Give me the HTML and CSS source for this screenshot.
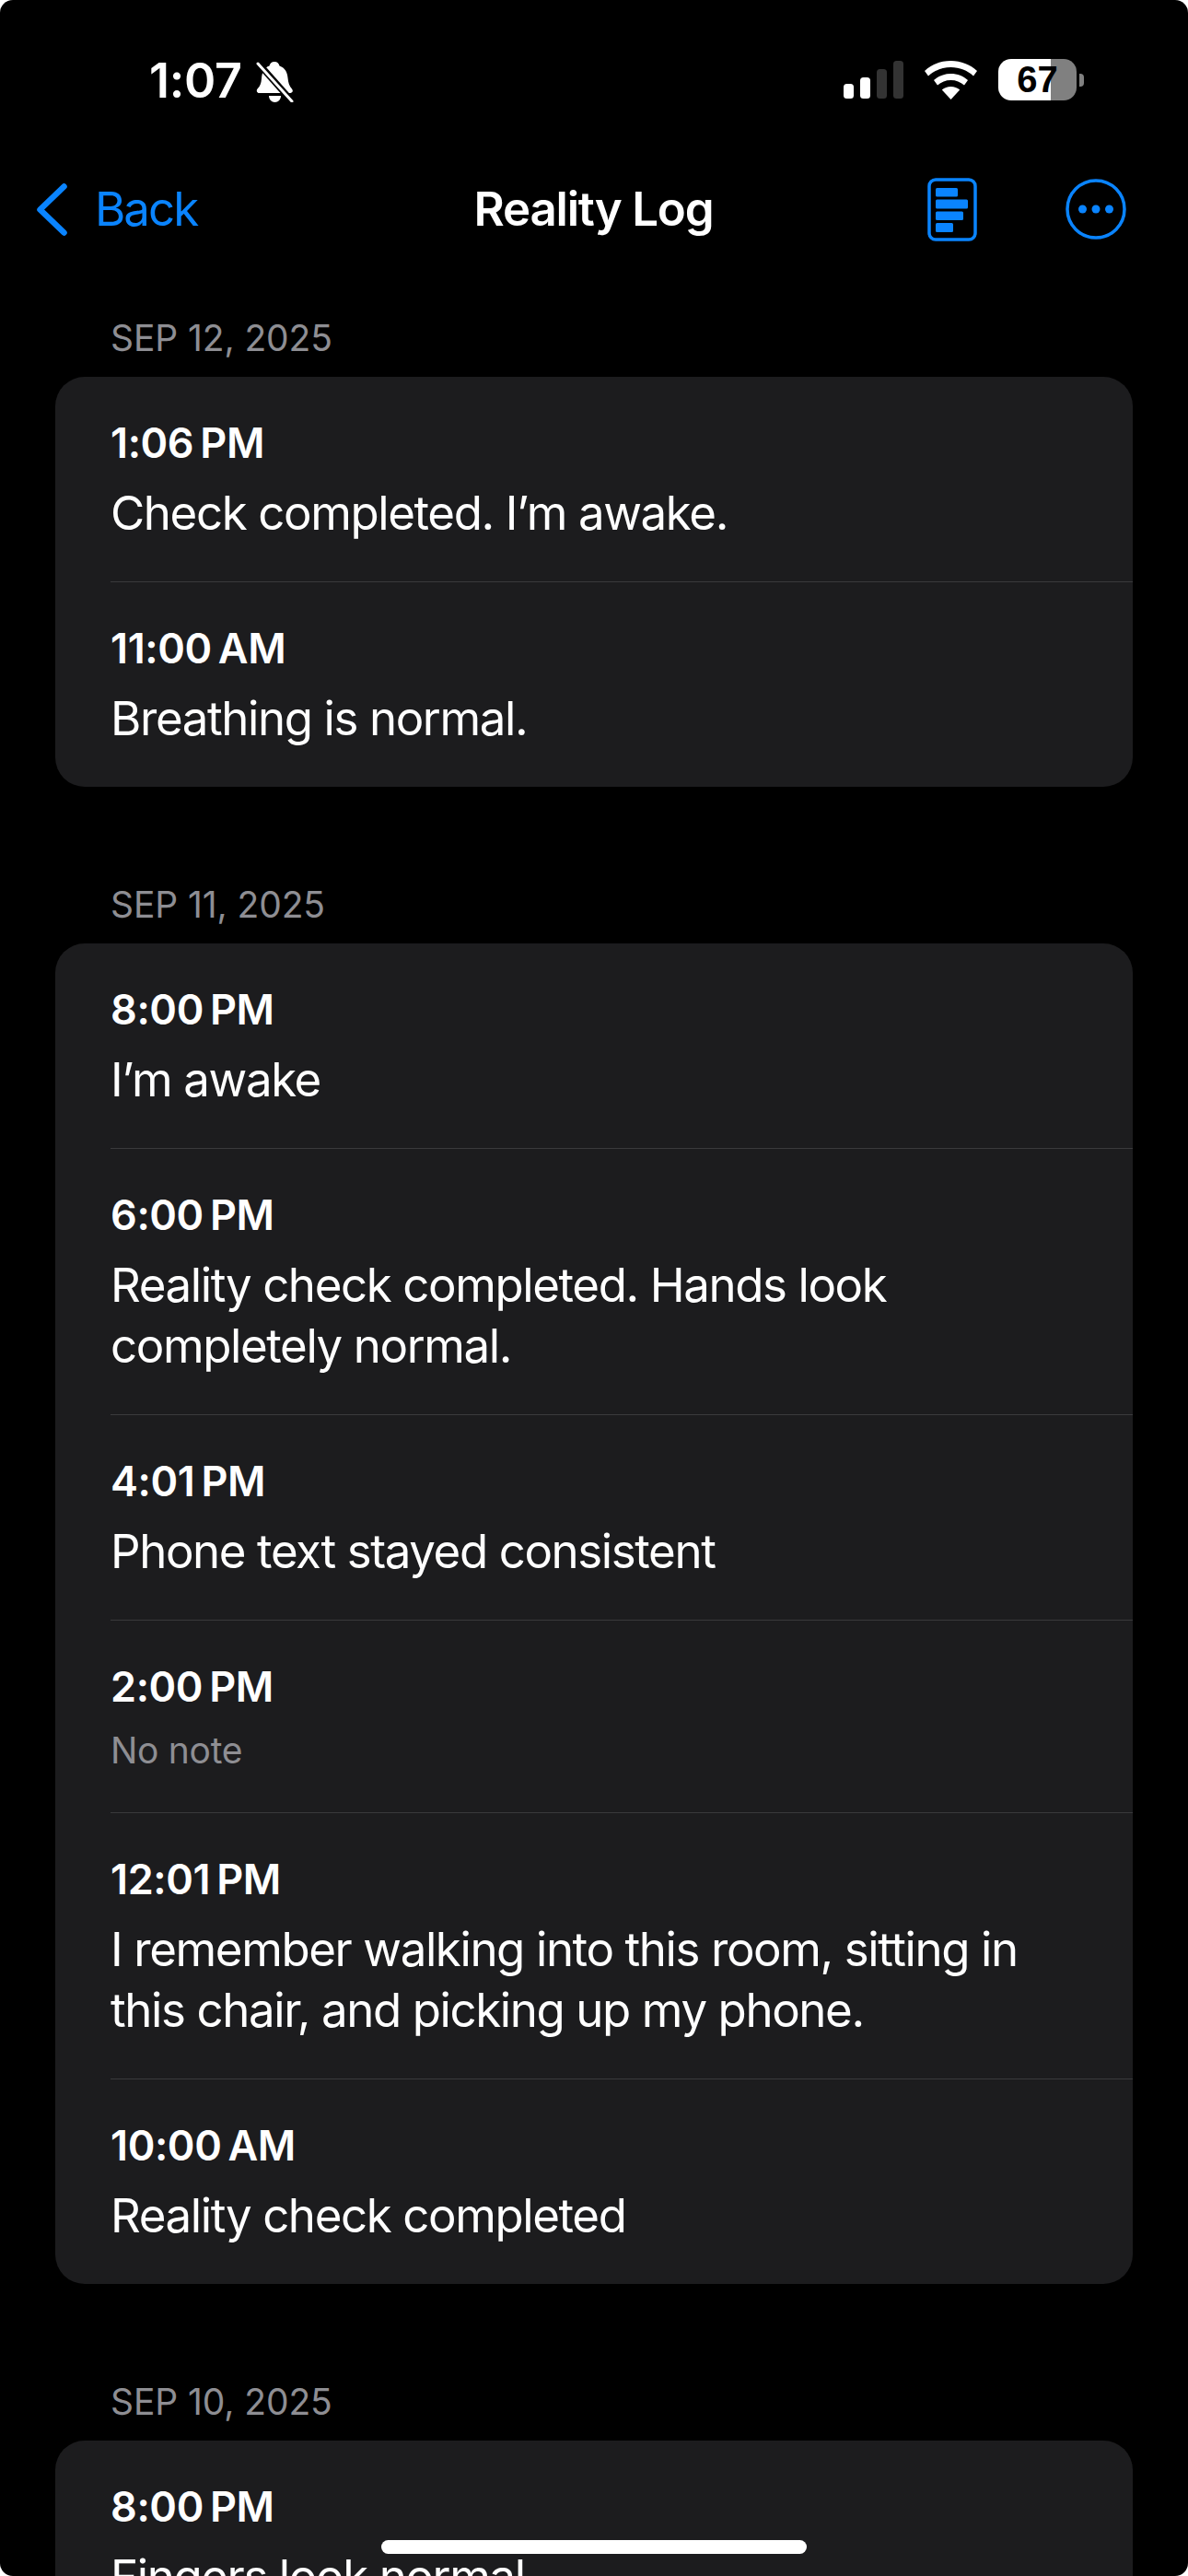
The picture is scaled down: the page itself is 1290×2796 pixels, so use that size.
FILE: index.html
```html
<!DOCTYPE html>
<html lang="en">
<head>
<meta charset="utf-8">
<title>Reality Log</title>
<link rel="stylesheet" href="styles.css">
</head>
<body>
<div class="screen">
  <header class="status">
    <div class="status-left">
      <span class="clock">1:07</span>
      <svg class="bell" width="41" height="44" viewBox="0 0 41 44">
        <path fill="#fff" d="M20 0c3 0 5 2 5.500 4.500 6 2 8.500 7 9 13 .5 5 1.500 9 4.500 12 1.500 1.800 1 4-1.500 4.500H3.500C1 34 0 31.500 1.500 29.500c3-3 4-6 4.500-11C6.500 11 9 6.500 14.500 4.500 15 2 17 0 20 0z"/>
        <path fill="#fff" d="M14 37h13c0 4-3 7-6.500 7S14 41 14 37z"/>
        <path stroke="#000" stroke-width="7" d="M1 0l39 44"/>
        <path stroke="#fff" stroke-width="3" stroke-linecap="round" d="M2 2l37 41"/>
      </svg>
    </div>
    <div class="status-right">
      <svg class="signal" width="65" height="42" viewBox="0 0 65 42">
        <rect x="0" y="25" width="11" height="16" rx="3.500" fill="#fff"/>
        <rect x="18" y="18" width="11" height="23" rx="3.500" fill="#fff"/>
        <rect x="36" y="9" width="11" height="32" rx="3.500" fill="#333"/>
        <rect x="54" y="0" width="11" height="41" rx="3.500" fill="#333"/>
      </svg>
      <svg class="wifi" width="57" height="42" viewBox="0 0 57 42">
        <path fill="#fff" d="M28.500 0C39.500 0 49.500 4 57 11l-4 5.500C46.500 10.500 38 7 28.500 7S10.500 10.500 4 16.500L0 11C7.500 4 17.500 0 28.500 0z"/>
        <path fill="#fff" d="M28.500 14c7 0 13.500 2.500 18.500 7l-4 5.500c-4-3.500-9-5.500-14.500-5.500S18 23 14 26.500L10 21c5-4.500 11.500-7 18.500-7z"/>
        <path fill="#fff" d="M28.500 28c3.800 0 7 1.200 9.700 3.500L28.500 42l-9.700-10.500c2.700-2.300 5.900-3.500 9.700-3.500z"/>
      </svg>
      <div class="battery">
        <div class="battery-body"><span class="battery-level">67</span></div>
        <div class="battery-tip"></div>
      </div>
    </div>
  </header>

  <nav class="nav">
    <div class="nav-left">
      <svg class="chevron" width="33" height="57" viewBox="0 0 33 57">
        <path fill="none" stroke="#0a84ff" stroke-width="6.500" stroke-linecap="round" stroke-linejoin="round" d="M29.500 3.500 3.500 28.500l26 25"/>
      </svg>
      <span class="back">Back</span>
    </div>
    <div class="title">Reality Log</div>
    <div class="nav-right">
      <svg class="doc" width="54" height="69" viewBox="0 0 54 69">
        <rect x="2" y="2" width="50" height="65" rx="7" fill="none" stroke="#0a84ff" stroke-width="3.500"/>
        <rect x="9" y="11" width="24" height="9.500" rx="1.500" fill="#0a84ff"/>
        <rect x="9" y="23.500" width="35" height="10" rx="1.500" fill="#0a84ff"/>
        <rect x="9" y="36.500" width="30" height="9.500" rx="1.500" fill="#0a84ff"/>
        <rect x="9" y="49" width="19" height="10" rx="1.500" fill="#0a84ff"/>
      </svg>
      <svg class="more" width="66" height="66" viewBox="0 0 66 66">
        <circle cx="33" cy="33" r="31" fill="none" stroke="#0a84ff" stroke-width="3.500"/>
        <circle cx="18.500" cy="33" r="4.500" fill="#0a84ff"/>
        <circle cx="33" cy="33" r="4.500" fill="#0a84ff"/>
        <circle cx="47.500" cy="33" r="4.500" fill="#0a84ff"/>
      </svg>
    </div>
  </nav>

  <main class="log">
    <section class="day">
      <h2 class="date">SEP 12, 2025</h2>
      <div class="card">
        <div class="row"><div class="time">1:06&#8239;PM</div><div class="note">Check completed. I’m awake.</div></div>
        <div class="row"><div class="time">11:00&#8239;AM</div><div class="note">Breathing is normal.</div></div>
      </div>
    </section>
    <section class="day">
      <h2 class="date">SEP 11, 2025</h2>
      <div class="card">
        <div class="row"><div class="time">8:00&#8239;PM</div><div class="note">I’m awake</div></div>
        <div class="row"><div class="time">6:00&#8239;PM</div><div class="note">Reality check completed. Hands look completely normal.</div></div>
        <div class="row"><div class="time">4:01&#8239;PM</div><div class="note">Phone text stayed consistent</div></div>
        <div class="row"><div class="time">2:00&#8239;PM</div><div class="note empty">No note</div></div>
        <div class="row"><div class="time">12:01&#8239;PM</div><div class="note">I remember walking into this room, sitting in this chair, and picking up my phone.</div></div>
        <div class="row"><div class="time">10:00&#8239;AM</div><div class="note">Reality check completed</div></div>
      </div>
    </section>
    <section class="day">
      <h2 class="date">SEP 10, 2025</h2>
      <div class="card">
        <div class="row"><div class="time">8:00&#8239;PM</div><div class="note">Fingers look normal</div></div>
      </div>
    </section>
  </main>

  <div class="home-indicator"></div>
</div>
</body>
</html>
```
FILE: styles.css
```css
html {
  background: #fff;
}
body {
  margin: 0;
}
.screen {
  position: relative;
  height: 2796px;
  overflow: hidden;
  background: #000;
  border-radius: 14px;
  color: #fff;
  font-family: Inter, "Liberation Sans", sans-serif;
}
.status {
  display: flex;
  justify-content: space-between;
  align-items: center;
  height: 56px;
  padding: 60px 113px 54px 162px;
}
.status-left {
  display: flex;
  align-items: center;
  gap: 15px;
}
.clock {
  font-size: 52px;
  font-weight: 600;
  line-height: 56px;
  letter-spacing: -0.300px;
}
.bell {
  margin-top: 1px;
}
.status-right {
  display: flex;
  align-items: center;
  margin-top: -3px;
}
.wifi {
  margin-left: 23px;
}
.battery {
  display: flex;
  align-items: center;
  margin-left: 23px;
}
.battery-body {
  width: 85px;
  height: 45px;
  border-radius: 14px;
  background: linear-gradient(90deg, #fff 0, #fff 57px, #808080 57px);
  display: flex;
  align-items: center;
  justify-content: center;
}
.battery-level {
  color: #000;
  font-size: 40px;
  font-weight: 700;
  line-height: 45px;
  font-family: "Liberation Sans", sans-serif;
}
.battery-tip {
  width: 5px;
  height: 14px;
  margin-left: 3px;
  background: #808080;
  border-radius: 0 4px 4px 0;
}
.nav {
  display: grid;
  grid-template-columns: 1fr auto 1fr;
  align-items: center;
  height: 114px;
  padding: 0 67px 0 40px;
}
.nav-left {
  display: flex;
  align-items: center;
  gap: 30px;
  color: #0a84ff;
}
.chevron {
  flex: none;
}
.back {
  font-size: 51px;
  line-height: 60px;
  letter-spacing: -2px;
}
.title {
  font-size: 51px;
  font-weight: 600;
  line-height: 60px;
  letter-spacing: -1.200px;
  position: relative;
  left: 13px;
}
.nav-right {
  display: flex;
  align-items: center;
  justify-content: flex-end;
  gap: 96px;
}
.log {
  padding: 59px 60px 0;
}
.day {
  margin-bottom: 104px;
}
.date {
  margin: 0 0 18px 60px;
  font-size: 39px;
  font-weight: 400;
  line-height: 48px;
  color: #8e8e93;
  letter-spacing: -0.100px;
}
.card {
  background: #1c1c1e;
  border-radius: 32px;
}
.row {
  margin-left: 60px;
  padding: 45px 60px 41px 0;
  border-top: 1px solid #3a3a3c;
}
.row:first-child {
  border-top: 0;
}
.time {
  font-size: 45px;
  font-weight: 560;
  line-height: 54px;
  margin-bottom: 16px;
  letter-spacing: -0.400px;
}
.note {
  font-size: 51px;
  line-height: 66px;
  letter-spacing: -1.400px;
}
.note.empty {
  font-size: 39px;
  line-height: 52px;
  color: #8e8e93;
  letter-spacing: -0.300px;
}
.home-indicator {
  position: absolute;
  left: 414px;
  top: 2757px;
  width: 462px;
  height: 15px;
  border-radius: 8px;
  background: #fff;
}
```
